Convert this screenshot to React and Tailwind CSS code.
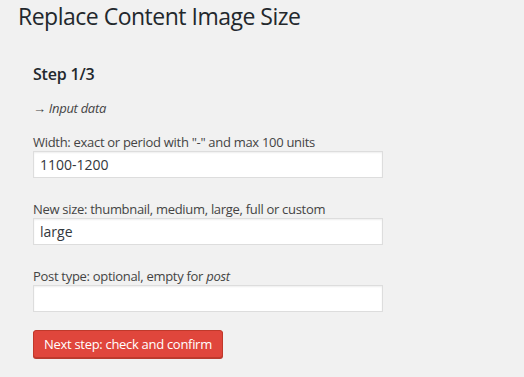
import React from 'react';

const fields = [
  { label: <>Width: exact or period with "-" and max 100 units</>, value: '1100-1200' },
  { label: <>New size: thumbnail, medium, large, full or custom</>, value: 'large' },
  { label: <>Post type: optional, empty for <em>post</em></>, value: '' },
];

function Field({ label, value }) {
  return (
    <div>
      <div className="h-[18px] text-[13px] leading-[18px] tracking-[-0.3px] text-[#444]">{label}</div>
      <input
        type="text"
        defaultValue={value}
        className="block h-[27px] w-[350px] border border-[#ddd] bg-white px-[6px] text-[14px] text-[#32373c] shadow-[inset_0_1px_2px_rgba(0,0,0,0.07)] outline-none"
      />
    </div>
  );
}

export default function App() {
  return (
    <div className="min-h-[377px] w-[524px] bg-[#f1f1f1] font-['Open_Sans',sans-serif] text-[#23282d]">
      <h1 className="h-[32px] pl-[18px] pt-[1px] text-[23px] font-normal leading-[30px] tracking-[-0.5px]">
        Replace Content Image Size
      </h1>
      <div className="pl-[33px] pt-[31px]">
        <h2 className="h-[22px] text-[16px] font-semibold leading-[22px] tracking-[-0.2px]">Step 1/3</h2>
        <p className="mt-[14px] h-[18px] text-[13px] italic leading-[18px] tracking-[-0.3px] text-[#444]">→ Input data</p>
        <div className="mt-[16px] flex flex-col gap-[22px]">
          {fields.map((f, i) => (
            <Field key={i} label={f.label} value={f.value} />
          ))}
        </div>
        <button className="mt-[18px] h-[28px] rounded-[3px] border border-[#c0392b] bg-[#e0463c] px-[10px] text-[13px] leading-[26px] tracking-[-0.3px] text-white shadow-[0_1px_0_#b83b30]">
          Next step: check and confirm
        </button>
      </div>
    </div>
  );
}
